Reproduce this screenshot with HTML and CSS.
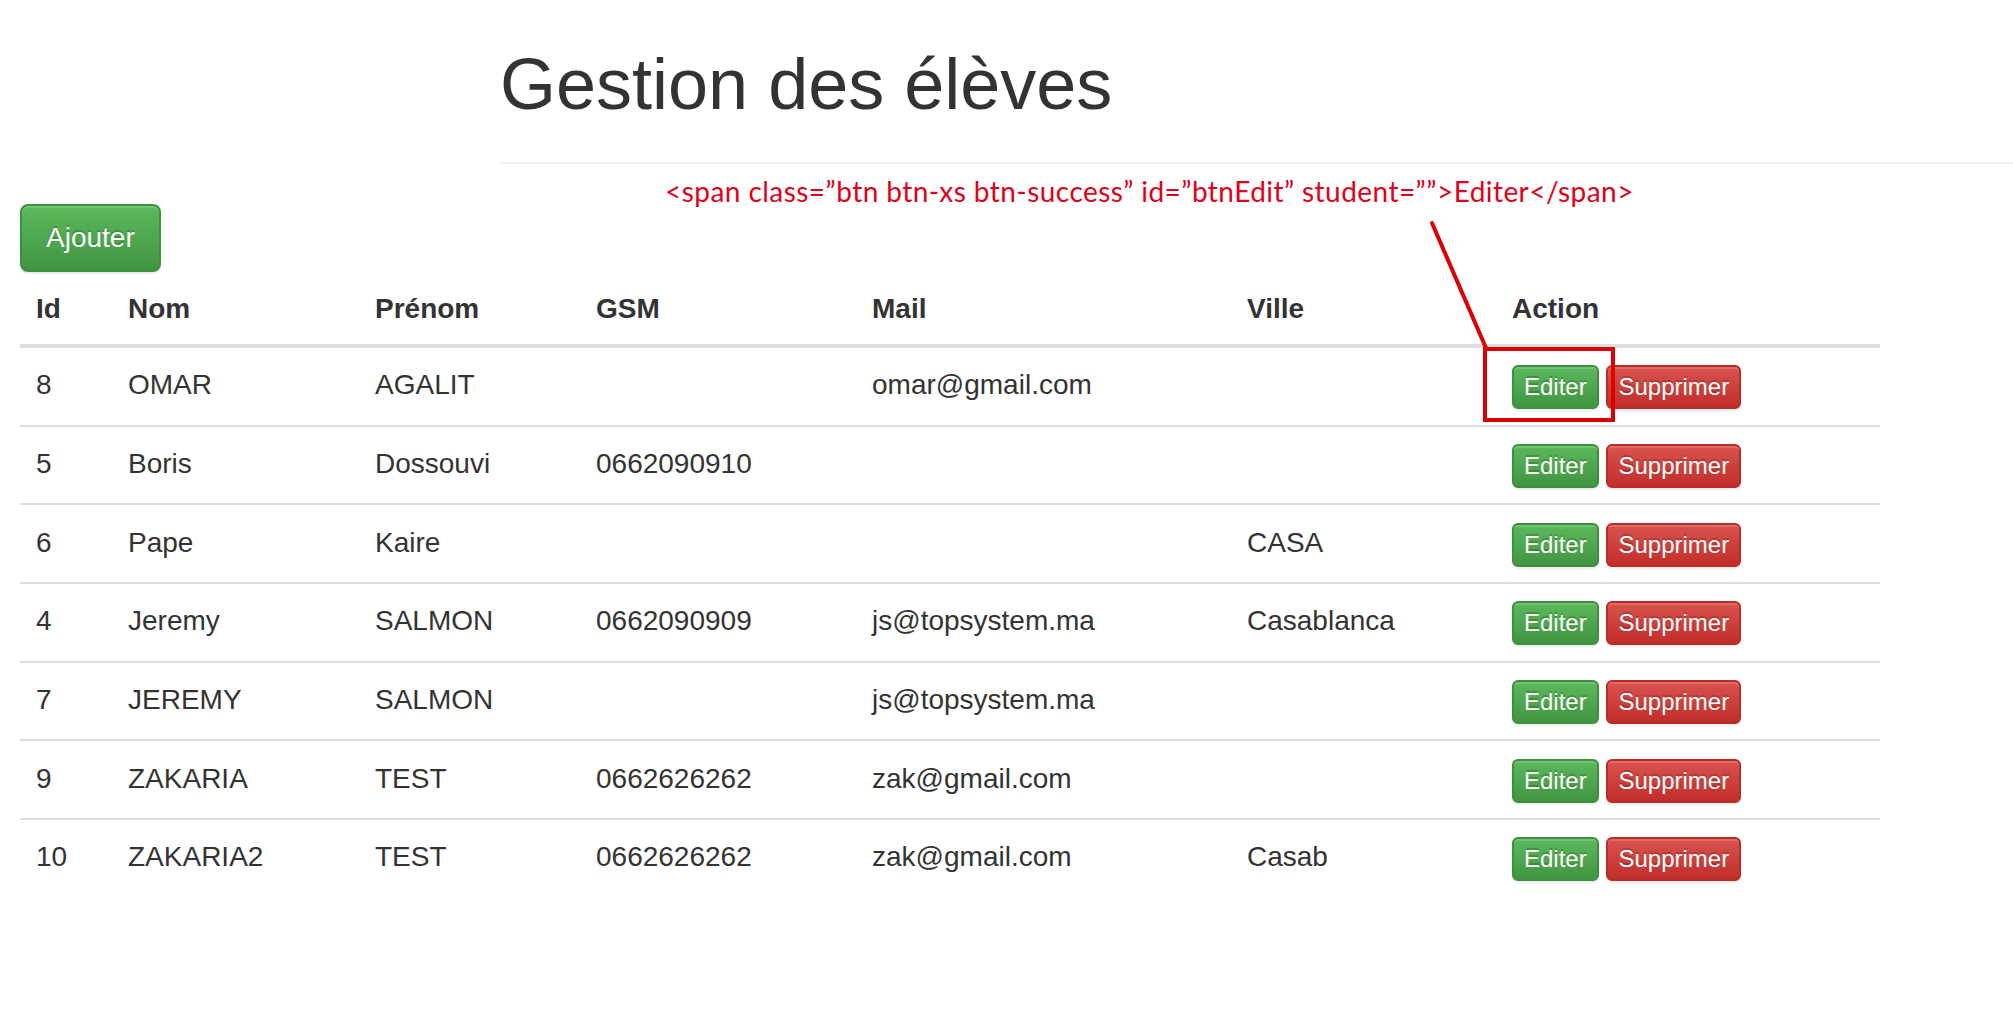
FILE: index.html
```html
<!DOCTYPE html>
<html lang="fr">
<head>
<meta charset="utf-8">
<title>Gestion des élèves</title>
<link rel="stylesheet" href="styles.css">
</head>
<body>
<div class="page">
  <header class="page-header">
    <h1>Gestion des élèves</h1>
  </header>

  <main class="content">
    <div class="toolbar">
      <span class="btn btn-success btn-lg-ish">Ajouter</span>
    </div>

    <table class="table">
      <colgroup>
        <col class="c-id">
        <col class="c-nom">
        <col class="c-prenom">
        <col class="c-gsm">
        <col class="c-mail">
        <col class="c-ville">
        <col class="c-action">
      </colgroup>
      <thead>
        <tr>
          <th>Id</th><th>Nom</th><th>Prénom</th><th>GSM</th><th>Mail</th><th>Ville</th><th>Action</th>
        </tr>
      </thead>
      <tbody>
        <tr>
          <td>8</td><td>OMAR</td><td>AGALIT</td><td></td><td>omar@gmail.com</td><td></td>
          <td><span class="btn btn-xs btn-success">Editer</span> <span class="btn btn-xs btn-danger">Supprimer</span></td>
        </tr>
        <tr>
          <td>5</td><td>Boris</td><td>Dossouvi</td><td>0662090910</td><td></td><td></td>
          <td><span class="btn btn-xs btn-success">Editer</span> <span class="btn btn-xs btn-danger">Supprimer</span></td>
        </tr>
        <tr>
          <td>6</td><td>Pape</td><td>Kaire</td><td></td><td></td><td>CASA</td>
          <td><span class="btn btn-xs btn-success">Editer</span> <span class="btn btn-xs btn-danger">Supprimer</span></td>
        </tr>
        <tr>
          <td>4</td><td>Jeremy</td><td>SALMON</td><td>0662090909</td><td>js@topsystem.ma</td><td>Casablanca</td>
          <td><span class="btn btn-xs btn-success">Editer</span> <span class="btn btn-xs btn-danger">Supprimer</span></td>
        </tr>
        <tr>
          <td>7</td><td>JEREMY</td><td>SALMON</td><td></td><td>js@topsystem.ma</td><td></td>
          <td><span class="btn btn-xs btn-success">Editer</span> <span class="btn btn-xs btn-danger">Supprimer</span></td>
        </tr>
        <tr>
          <td>9</td><td>ZAKARIA</td><td>TEST</td><td>0662626262</td><td>zak@gmail.com</td><td></td>
          <td><span class="btn btn-xs btn-success">Editer</span> <span class="btn btn-xs btn-danger">Supprimer</span></td>
        </tr>
        <tr>
          <td>10</td><td>ZAKARIA2</td><td>TEST</td><td>0662626262</td><td>zak@gmail.com</td><td>Casab</td>
          <td><span class="btn btn-xs btn-success">Editer</span> <span class="btn btn-xs btn-danger">Supprimer</span></td>
        </tr>
      </tbody>
    </table>
  </main>

  <div class="annotation-text">&lt;span class=”btn btn-xs btn-success” id=”btnEdit” student=””&gt;Editer&lt;/span&gt;</div>
  <svg class="annotation-marks" width="2013" height="1020" viewBox="0 0 2013 1020" aria-hidden="true">
    <line x1="1432" y1="223" x2="1486" y2="348" stroke="#dc0000" stroke-width="4" stroke-linecap="round"/>
    <rect x="1485" y="349" width="128" height="71" fill="none" stroke="#dc0000" stroke-width="4"/>
  </svg>
</div>
</body>
</html>
```

FILE: styles.css
```css
html, body {
  margin: 0;
  padding: 0;
  background: #fff;
}

body {
  font-family: "Liberation Sans", Arial, Helvetica, sans-serif;
  font-size: 28px;
  line-height: 40px;
  color: #333;
}

.page {
  position: relative;
  width: 2013px;
  min-height: 1020px;
  overflow: hidden;
}

/* Header */
.page-header {
  margin: 0 0 40px 500px;
  padding: 45px 0 18px 0;
  border-bottom: 2px solid #eee;
}

.page-header h1 {
  margin: 0 0 20px 0;
  font-size: 72px;
  line-height: 79px;
  font-weight: 500;
  color: #333;
}

/* Content */
.content {
  padding-left: 20px;
}

.toolbar {
  display: flex;
}

/* Buttons (bootstrap-theme look, 2x) */
.btn {
  display: inline-block;
  vertical-align: middle;
  white-space: nowrap;
  color: #fff;
  border-style: solid;
  text-shadow: 0 -2px 0 rgba(0, 0, 0, 0.2);
  box-shadow: inset 0 2px 0 rgba(255, 255, 255, 0.15), 0 2px 2px rgba(0, 0, 0, 0.075);
}

.btn-lg-ish {
  padding: 12px 24px;
  font-size: 28px;
  line-height: 40px;
  border-width: 2px;
  border-radius: 8px;
}

.btn-xs {
  padding: 2px 10px;
  font-size: 24px;
  line-height: 36px;
  border-width: 2px;
  border-radius: 6px;
}

.btn-success {
  background-color: #5cb85c;
  background-image: linear-gradient(to bottom, #5cb85c 0%, #419641 100%);
  border-color: #3e8f3e;
}

.btn-danger {
  background-color: #d9534f;
  background-image: linear-gradient(to bottom, #d9534f 0%, #c12e2a 100%);
  border-color: #b92c28;
}

/* Table */
.table {
  width: 1860px;
  table-layout: fixed;
  border-collapse: collapse;
  border-spacing: 0;
}

.c-id { width: 92px; }
.c-nom { width: 247px; }
.c-prenom { width: 221px; }
.c-gsm { width: 276px; }
.c-mail { width: 375px; }
.c-ville { width: 265px; }
.c-action { width: 384px; }

.table th {
  text-align: left;
  font-weight: bold;
  padding: 17px 16px 15px;
  line-height: 40px;
  vertical-align: bottom;
  border-bottom: 4px solid #ddd;
}

.table td {
  padding: 17.3px 16px 15.4px;
  line-height: 40px;
  vertical-align: top;
  border-top: 2px solid #ddd;
  white-space: nowrap;
}

/* Annotation overlay */
.annotation-text {
  position: absolute;
  left: 665px;
  top: 175px;
  font-family: "Lato", "Open Sans", sans-serif;
  font-size: 28px;
  line-height: 32px;
  letter-spacing: 0.45px;
  color: #e1001a;
  white-space: nowrap;
}

.annotation-marks {
  position: absolute;
  left: 0;
  top: 0;
  pointer-events: none;
}
```
